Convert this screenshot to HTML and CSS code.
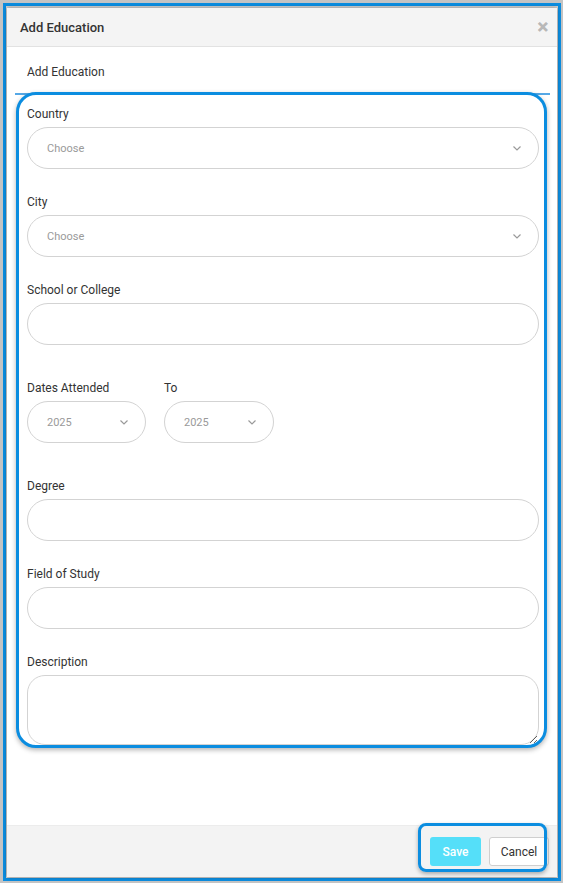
FILE: index.html
```html
<!DOCTYPE html>
<html lang="en">
    <head>
        <link rel="stylesheet" href="styles.css">
        <title>Add Education</title>
    </head>

    <body>
        <div class="frame">
            <div class="dialog">
                <!-- header -->
                <div class="dialog-header">
                    <span class="dialog-title">Add Education</span>
                    <span class="close">&#x2715;</span>
                </div>

                <div class="dialog-body">
                    <div class="tab">Add Education</div>

                    <div class="form-box">
                        <div class="group">
                            <label>Country</label>
                            <div class="select wide">
                                <span>Choose</span>
                                <svg class="chev" width="8" height="5" viewBox="0 0 8 5"><polyline points="0.5,0.5 4,4 7.5,0.5" /></svg>
                            </div>
                        </div>

                        <div class="group">
                            <label>City</label>
                            <div class="select wide">
                                <span>Choose</span>
                                <svg class="chev" width="8" height="5" viewBox="0 0 8 5"><polyline points="0.5,0.5 4,4 7.5,0.5" /></svg>
                            </div>
                        </div>

                        <div class="group">
                            <label>School or College</label>
                            <div class="input"></div>
                        </div>

                        <div class="group spaced dates">
                            <div class="date-col">
                                <label>Dates Attended</label>
                                <div class="select from">
                                    <span>2025</span>
                                    <svg class="chev" width="8" height="5" viewBox="0 0 8 5"><polyline points="0.5,0.5 4,4 7.5,0.5" /></svg>
                                </div>
                            </div>
                            <div class="date-col">
                                <label>To</label>
                                <div class="select to">
                                    <span>2025</span>
                                    <svg class="chev" width="8" height="5" viewBox="0 0 8 5"><polyline points="0.5,0.5 4,4 7.5,0.5" /></svg>
                                </div>
                            </div>
                        </div>

                        <div class="group spaced">
                            <label>Degree</label>
                            <div class="input"></div>
                        </div>

                        <div class="group">
                            <label>Field of Study</label>
                            <div class="input"></div>
                        </div>

                        <div class="group">
                            <label>Description</label>
                            <textarea class="textarea"></textarea>
                        </div>
                    </div>
                </div>

                <!-- buttons -->
                <div class="dialog-footer">
                    <button class="btn save" type="button">Save</button>
                    <button class="btn cancel" type="button">Cancel</button>
                    <div class="footer-mark"></div>
                </div>
            </div>
        </div>
    </body>
</html>
```

FILE: styles.css
```css
* {
    box-sizing: border-box;
    margin: 0;
    padding: 0;
}
html,
body {
    height: 100%;
}
body {
    background: #c4c4c4;
    font-family: Roboto, 'Liberation Sans', Arial, sans-serif;
    color: #333;
    overflow: hidden;
}
.frame {
    height: 878px;
    margin: 3px 2px 2px 3px;
    border: 3px solid #0b8de0;
    padding: 2px 1px 1px 1px;
    background: #d0d0d0;
}
.dialog {
    height: 100%;
    display: flex;
    flex-direction: column;
    background: #fff;
    box-shadow: 0 0 4px rgba(0, 0, 0, 0.35);
}
.dialog-header {
    height: 39px;
    display: flex;
    align-items: center;
    justify-content: space-between;
    padding: 0 8px 0 13px;
    background: #f4f4f4;
    border-bottom: 1px solid #e2e2e2;
}
.dialog-title {
    font-size: 13px;
    font-weight: 500;
    color: #333;
}
.close {
    font-size: 14px;
    font-weight: 700;
    color: #b8b8b8;
    -webkit-text-stroke: 0.6px #b8b8b8;
}
.dialog-body {
    flex: 1;
    padding: 0 7px 0 8px;
}
.tab {
    height: 48px;
    padding: 18px 0 0 12px;
    font-size: 12px;
    line-height: 14px;
    color: #333;
    border-bottom: 2px solid #55a8e6;
}
.form-box {
    height: 656px;
    margin: -3px 3px 0 1px;
    border: 3px solid #0b8de0;
    border-radius: 20px;
    padding: 11px 5px 0 8px;
    overflow: hidden;
    display: flex;
    flex-direction: column;
    background: #fff;
    box-shadow: 0 2px 5px rgba(0, 0, 0, 0.3);
}
.group {
    flex-shrink: 0;
    margin-bottom: 25px;
}
.group.spaced {
    margin-top: 10px;
}
.group label {
    display: block;
    font-size: 12px;
    line-height: 16px;
    color: #333;
    margin-bottom: 5px;
}
.select,
.input {
    height: 42px;
    border: 1px solid #d3d3d3;
    border-radius: 21px;
    background: #fff;
}
.select {
    display: flex;
    align-items: center;
    justify-content: space-between;
    padding: 0 17px 0 19px;
    font-size: 11px;
    color: #9a9a9a;
}
.chev polyline {
    fill: none;
    stroke: #9a9a9a;
    stroke-width: 1.2;
}
.dates {
    display: flex;
    gap: 18px;
}
.select.from {
    width: 119px;
}
.select.to {
    width: 110px;
}
.textarea {
    display: block;
    width: 100%;
    height: 70px;
    border: 1px solid #d3d3d3;
    border-radius: 18px;
    font-family: inherit;
    outline: none;
}
.dialog-footer {
    position: relative;
    height: 52px;
    display: flex;
    justify-content: flex-end;
    align-items: center;
    gap: 8px;
    padding: 0 8px;
    background: #f3f3f3;
    border-top: 1px solid #ececec;
}
.btn {
    height: 29px;
    border-radius: 3px;
    font-family: inherit;
    font-size: 12px;
}
.btn.save {
    width: 51px;
    background: #55dff9;
    border: 0;
    color: #fff;
    font-weight: 500;
}
.btn.cancel {
    width: 60px;
    background: #fff;
    border: 1px solid #cfcfcf;
    color: #333;
}
.footer-mark {
    position: absolute;
    right: 10px;
    top: -3px;
    width: 129px;
    height: 49px;
    border: 3px solid #0b8de0;
    border-radius: 8px;
    box-shadow: 0 2px 4px rgba(0, 0, 0, 0.3);
    pointer-events: none;
}
```
